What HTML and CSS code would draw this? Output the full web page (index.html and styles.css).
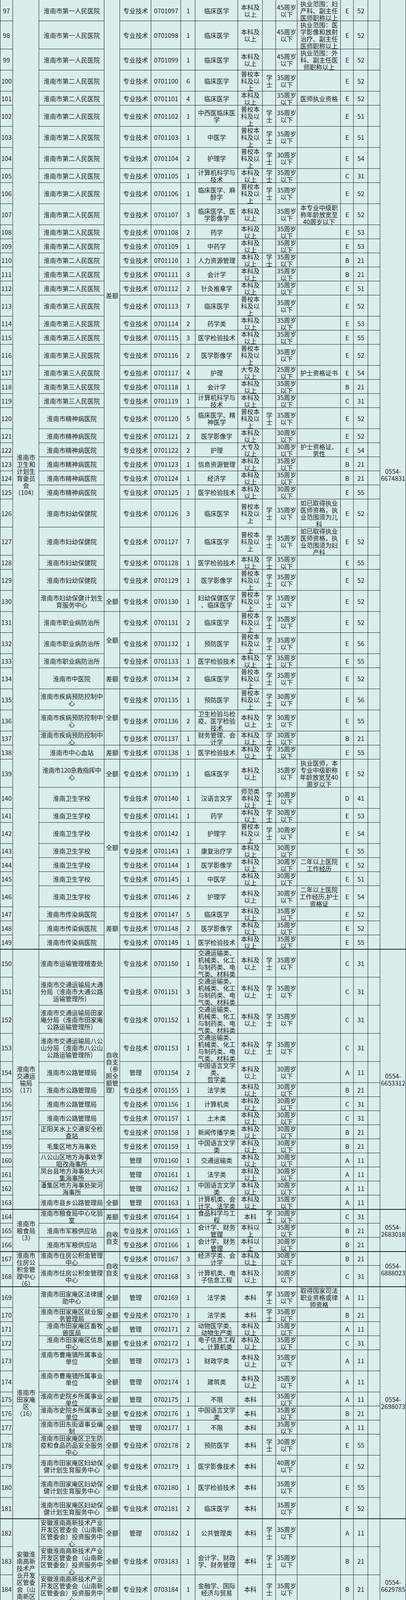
FILE: index.html
```html
<!DOCTYPE html>
<html lang="zh-CN">
<head>
<meta charset="utf-8">
<title>岗位表</title>
<link rel="stylesheet" href="styles.css">
</head>
<body>
<div class="sheet">
<div class="row h3"><div>97</div><div class="s135"><span>淮南市<br>卫生和<br>计划生<br>育委员<br>会<br>（104）</span></div><div>淮南市第一人民医院</div><div class="s84">差额</div><div>专业技术</div><div>0701097</div><div>1</div><div>临床医学</div><div><span>本科及<br>以上</span></div><div></div><div><span>45周岁<br>以下</span></div><div><span>执业范围：妇<br>产科、副主任<br>医师职称以上</span></div><div>E</div><div>52</div><div></div><div class="s135"><span>0554-<br>6674831</span></div></div>
<div class="row h4"><div>98</div><div>淮南市第一人民医院</div><div>专业技术</div><div>0701098</div><div>1</div><div>临床医学</div><div><span>本科及<br>以上</span></div><div></div><div><span>45周岁<br>以下</span></div><div><span>执业范围：医<br>学影像和放射<br>治疗、副主任<br>医师职称以上</span></div><div>E</div><div>52</div><div></div></div>
<div class="row h3"><div>99</div><div>淮南市第一人民医院</div><div>专业技术</div><div>0701099</div><div>1</div><div>临床医学</div><div><span>本科及<br>以上</span></div><div></div><div><span>45周岁<br>以下</span></div><div><span>执业范围：外<br>科、副主任医<br>师职称以上</span></div><div>E</div><div>52</div><div></div></div>
<div class="row h3"><div>100</div><div>淮南市第二人民医院</div><div>专业技术</div><div>0701100</div><div>6</div><div>临床医学</div><div><span>普校本<br>科及以<br>上</span></div><div><span>学<br>士</span></div><div><span>35周岁<br>以下</span></div><div></div><div>E</div><div>52</div><div></div></div>
<div class="row h2"><div>101</div><div>淮南市第二人民医院</div><div>专业技术</div><div>0701101</div><div>4</div><div>临床医学</div><div><span>本科及<br>以上</span></div><div></div><div><span>35周岁<br>以下</span></div><div>医师执业资格</div><div>E</div><div>52</div><div></div></div>
<div class="row h3"><div>102</div><div>淮南市第二人民医院</div><div>专业技术</div><div>0701102</div><div>1</div><div><span>中西医临床医<br>学</span></div><div><span>普校本<br>科及以<br>上</span></div><div><span>学<br>士</span></div><div><span>35周岁<br>以下</span></div><div></div><div>E</div><div>51</div><div></div></div>
<div class="row h3"><div>103</div><div>淮南市第二人民医院</div><div>专业技术</div><div>0701103</div><div>1</div><div>中医学</div><div><span>普校本<br>科及以<br>上</span></div><div><span>学<br>士</span></div><div><span>35周岁<br>以下</span></div><div></div><div>E</div><div>51</div><div></div></div>
<div class="row h3"><div>104</div><div>淮南市第二人民医院</div><div>专业技术</div><div>0701104</div><div>2</div><div>护理学</div><div><span>普校本<br>科及以<br>上</span></div><div><span>学<br>士</span></div><div><span>30周岁<br>以下</span></div><div></div><div>E</div><div>54</div><div></div></div>
<div class="row h2"><div>105</div><div>淮南市第二人民医院</div><div>专业技术</div><div>0701105</div><div>1</div><div><span>计算机科学与<br>技术</span></div><div><span>本科及<br>以上</span></div><div><span>学<br>士</span></div><div><span>35周岁<br>以下</span></div><div></div><div>C</div><div>31</div><div></div></div>
<div class="row h3"><div>106</div><div>淮南市第二人民医院</div><div>专业技术</div><div>0701106</div><div>1</div><div><span>临床医学、麻<br>醉学</span></div><div><span>普校本<br>科及以<br>上</span></div><div><span>学<br>士</span></div><div><span>35周岁<br>以下</span></div><div></div><div>E</div><div>52</div><div></div></div>
<div class="row h3"><div>107</div><div>淮南市第二人民医院</div><div>专业技术</div><div>0701107</div><div>3</div><div><span>临床医学、医<br>学影像学</span></div><div><span>本科及<br>以上</span></div><div></div><div><span>35周岁<br>以下</span></div><div><span>本专业中级职<br>称年龄放宽至<br>40周岁以下</span></div><div>E</div><div>52</div><div></div></div>
<div class="row h2"><div>108</div><div>淮南市第二人民医院</div><div>专业技术</div><div>0701108</div><div>2</div><div>药学</div><div><span>本科及<br>以上</span></div><div></div><div><span>35周岁<br>以下</span></div><div></div><div>E</div><div>53</div><div></div></div>
<div class="row h2"><div>109</div><div>淮南市第二人民医院</div><div>专业技术</div><div>0701109</div><div>1</div><div>中药学</div><div><span>本科及<br>以上</span></div><div></div><div><span>35周岁<br>以下</span></div><div></div><div>E</div><div>53</div><div></div></div>
<div class="row h2"><div>110</div><div>淮南市第二人民医院</div><div>专业技术</div><div>0701110</div><div>1</div><div>人力资源管理</div><div><span>本科及<br>以上</span></div><div><span>学<br>士</span></div><div><span>35周岁<br>以下</span></div><div></div><div>B</div><div>21</div><div></div></div>
<div class="row h2"><div>111</div><div>淮南市第二人民医院</div><div>专业技术</div><div>0701111</div><div>3</div><div>会计学</div><div><span>本科及<br>以上</span></div><div></div><div><span>35周岁<br>以下</span></div><div></div><div>B</div><div>21</div><div></div></div>
<div class="row h2"><div>112</div><div>淮南市第二人民医院</div><div>专业技术</div><div>0701112</div><div>2</div><div>针灸推拿学</div><div><span>本科及<br>以上</span></div><div></div><div><span>35周岁<br>以下</span></div><div></div><div>E</div><div>51</div><div></div></div>
<div class="row h3"><div>113</div><div>淮南市第三人民医院</div><div>专业技术</div><div>0701113</div><div>7</div><div>临床医学</div><div><span>普校本<br>科及以<br>上</span></div><div></div><div><span>35周岁<br>以下</span></div><div></div><div>E</div><div>52</div><div></div></div>
<div class="row h2"><div>114</div><div>淮南市第三人民医院</div><div>专业技术</div><div>0701114</div><div>2</div><div>药学类</div><div><span>本科及<br>以上</span></div><div></div><div><span>35周岁<br>以下</span></div><div></div><div>E</div><div>53</div><div></div></div>
<div class="row h2"><div>115</div><div>淮南市第三人民医院</div><div>专业技术</div><div>0701115</div><div>3</div><div>医学检验技术</div><div><span>本科及<br>以上</span></div><div></div><div><span>35周岁<br>以下</span></div><div></div><div>E</div><div>55</div><div></div></div>
<div class="row h3"><div>116</div><div>淮南市第三人民医院</div><div>专业技术</div><div>0701116</div><div>2</div><div>医学影像学</div><div><span>普校本<br>科及以<br>上</span></div><div></div><div><span>35周岁<br>以下</span></div><div></div><div>E</div><div>52</div><div></div></div>
<div class="row h2"><div>117</div><div>淮南市第三人民医院</div><div>专业技术</div><div>0701117</div><div>4</div><div>护理</div><div><span>大专及<br>以上</span></div><div></div><div><span>25周岁<br>以下</span></div><div>护士资格证书</div><div>E</div><div>54</div><div></div></div>
<div class="row h2"><div>118</div><div>淮南市第三人民医院</div><div>专业技术</div><div>0701118</div><div>1</div><div>会计学</div><div><span>本科及<br>以上</span></div><div></div><div><span>35周岁<br>以下</span></div><div></div><div>B</div><div>21</div><div></div></div>
<div class="row h2"><div>119</div><div>淮南市第三人民医院</div><div>专业技术</div><div>0701119</div><div>1</div><div><span>计算机科学与<br>技术</span></div><div><span>本科及<br>以上</span></div><div></div><div><span>35周岁<br>以下</span></div><div></div><div>C</div><div>31</div><div></div></div>
<div class="row h3"><div>120</div><div>淮南市精神病医院</div><div>专业技术</div><div>0701120</div><div>5</div><div><span>临床医学、精<br>神医学</span></div><div><span>普校本<br>科及以<br>上</span></div><div><span>学<br>士</span></div><div><span>35周岁<br>以下</span></div><div></div><div>E</div><div>52</div><div></div></div>
<div class="row h2"><div>121</div><div>淮南市精神病医院</div><div>专业技术</div><div>0701121</div><div>2</div><div>医学影像学</div><div><span>本科及<br>以上</span></div><div></div><div><span>30周岁<br>以下</span></div><div></div><div>E</div><div>52</div><div></div></div>
<div class="row h2"><div>122</div><div>淮南市精神病医院</div><div>专业技术</div><div>0701122</div><div>2</div><div>护理</div><div><span>大专及<br>以上</span></div><div></div><div><span>30周岁<br>以下</span></div><div><span>护士资格证、<br>男性</span></div><div>E</div><div>54</div><div></div></div>
<div class="row h2"><div>123</div><div>淮南市精神病医院</div><div>专业技术</div><div>0701123</div><div>1</div><div>信息资源管理</div><div><span>本科及<br>以上</span></div><div></div><div><span>35周岁<br>以下</span></div><div></div><div>B</div><div>21</div><div></div></div>
<div class="row h2"><div>124</div><div>淮南市精神病医院</div><div>专业技术</div><div>0701124</div><div>1</div><div>经济学</div><div><span>本科及<br>以上</span></div><div></div><div><span>35周岁<br>以下</span></div><div></div><div>B</div><div>21</div><div></div></div>
<div class="row h2"><div>125</div><div>淮南市精神病医院</div><div>专业技术</div><div>0701125</div><div>1</div><div>医学检验技术</div><div><span>本科及<br>以上</span></div><div></div><div><span>30周岁<br>以下</span></div><div></div><div>E</div><div>55</div><div></div></div>
<div class="row h4"><div>126</div><div>淮南市妇幼保健院</div><div>专业技术</div><div>0701126</div><div>3</div><div>临床医学</div><div><span>普校本<br>科及以<br>上</span></div><div><span>学<br>士</span></div><div><span>35周岁<br>以下</span></div><div><span>如已取得执业<br>医师资格，执<br>业范围须为儿<br>科</span></div><div>E</div><div>52</div><div></div></div>
<div class="row h4"><div>127</div><div>淮南市妇幼保健院</div><div>专业技术</div><div>0701127</div><div>7</div><div>临床医学</div><div><span>普校本<br>科及以<br>上</span></div><div><span>学<br>士</span></div><div><span>35周岁<br>以下</span></div><div><span>如已取得执业<br>医师资格，执<br>业范围须为妇<br>产科</span></div><div>E</div><div>52</div><div></div></div>
<div class="row h2"><div>128</div><div>淮南市妇幼保健院</div><div>专业技术</div><div>0701128</div><div>1</div><div>医学检验技术</div><div><span>本科及<br>以上</span></div><div><span>学<br>士</span></div><div><span>35周岁<br>以下</span></div><div></div><div>E</div><div>55</div><div></div></div>
<div class="row h3"><div>129</div><div>淮南市妇幼保健院</div><div>专业技术</div><div>0701129</div><div>1</div><div>医学影像学</div><div><span>普校本<br>科及以<br>上</span></div><div><span>学<br>士</span></div><div><span>35周岁<br>以下</span></div><div></div><div>E</div><div>52</div><div></div></div>
<div class="row h3"><div>130</div><div><span>淮南市妇幼保健计划生<br>育服务中心</span></div><div>全额</div><div>专业技术</div><div>0701130</div><div>1</div><div><span>妇幼保健医学<br>、临床医学</span></div><div><span>普校本<br>科及以<br>上</span></div><div><span>学<br>士</span></div><div><span>35周岁<br>以下</span></div><div></div><div>E</div><div>52</div><div></div></div>
<div class="row h3"><div>131</div><div>淮南市职业病防治所</div><div class="s8">全额</div><div>专业技术</div><div>0701131</div><div>2</div><div>临床医学</div><div><span>普校本<br>科及以<br>上</span></div><div><span>学<br>士</span></div><div><span>35周岁<br>以下</span></div><div></div><div>E</div><div>52</div><div></div></div>
<div class="row h3"><div>132</div><div>淮南市职业病防治所</div><div>专业技术</div><div>0701132</div><div>1</div><div>预防医学</div><div><span>普校本<br>科及以<br>上</span></div><div><span>学<br>士</span></div><div><span>35周岁<br>以下</span></div><div></div><div>E</div><div>56</div><div></div></div>
<div class="row h2"><div>133</div><div>淮南市职业病防治所</div><div>专业技术</div><div>0701133</div><div>1</div><div>医学检验技术</div><div><span>本科及<br>以上</span></div><div><span>学<br>士</span></div><div><span>35周岁<br>以下</span></div><div></div><div>E</div><div>55</div><div></div></div>
<div class="row h3"><div>134</div><div>淮南市中医院</div><div>差额</div><div>专业技术</div><div>0701134</div><div>2</div><div>临床医学</div><div><span>普校本<br>科及以<br>上</span></div><div><span>学<br>士</span></div><div><span>35周岁<br>以下</span></div><div></div><div>E</div><div>52</div><div></div></div>
<div class="row h3"><div>135</div><div><span>淮南市疾病预防控制中<br>心</span></div><div class="s8">全额</div><div>专业技术</div><div>0701135</div><div>1</div><div>预防医学</div><div><span>普校本<br>科及以<br>上</span></div><div><span>学<br>士</span></div><div><span>30周岁<br>以下</span></div><div></div><div>E</div><div>56</div><div></div></div>
<div class="row h3"><div>136</div><div><span>淮南市疾病预防控制中<br>心</span></div><div>专业技术</div><div>0701136</div><div>2</div><div><span>卫生检验与检<br>疫、医学检验<br>技术</span></div><div><span>本科及<br>以上</span></div><div><span>学<br>士</span></div><div><span>30周岁<br>以下</span></div><div></div><div>E</div><div>55</div><div></div></div>
<div class="row h2"><div>137</div><div><span>淮南市疾病预防控制中<br>心</span></div><div>专业技术</div><div>0701137</div><div>1</div><div><span>财务管理、会<br>计学</span></div><div><span>本科及<br>以上</span></div><div><span>学<br>士</span></div><div><span>30周岁<br>以下</span></div><div></div><div>B</div><div>21</div><div></div></div>
<div class="row h2"><div>138</div><div>淮南市中心血站</div><div>差额</div><div>专业技术</div><div>0701138</div><div>1</div><div>医学检验技术</div><div><span>本科及<br>以上</span></div><div><span>学<br>士</span></div><div><span>35周岁<br>以下</span></div><div></div><div>E</div><div>55</div><div></div></div>
<div class="row h4"><div>139</div><div class="tight"><span>淮南市120急救指挥中<br>心</span></div><div>全额</div><div>专业技术</div><div>0701139</div><div>1</div><div>临床医学</div><div><span>本科及<br>以上</span></div><div></div><div><span>35周岁<br>以下</span></div><div><span>执业医师，本<br>专业中级职称<br>年龄放宽至40<br>周岁以下</span></div><div>E</div><div>52</div><div></div></div>
<div class="row h3"><div>140</div><div>淮南卫生学校</div><div class="s17">全额</div><div>专业技术</div><div>0701140</div><div>1</div><div>汉语言文学</div><div><span>师范类<br>本科及<br>以上</span></div><div><span>学<br>士</span></div><div><span>30周岁<br>以下</span></div><div></div><div>D</div><div>41</div><div></div></div>
<div class="row h2"><div>141</div><div>淮南卫生学校</div><div>专业技术</div><div>0701141</div><div>1</div><div>药学</div><div><span>本科及<br>以上</span></div><div><span>学<br>士</span></div><div><span>30周岁<br>以下</span></div><div></div><div>E</div><div>53</div><div></div></div>
<div class="row h3"><div>142</div><div>淮南卫生学校</div><div>专业技术</div><div>0701142</div><div>1</div><div>护理学</div><div><span>普校本<br>科及以<br>上</span></div><div><span>学<br>士</span></div><div><span>30周岁<br>以下</span></div><div></div><div>E</div><div>54</div><div></div></div>
<div class="row h2"><div>143</div><div>淮南卫生学校</div><div>专业技术</div><div>0701143</div><div>1</div><div>康复治疗学</div><div><span>本科及<br>以上</span></div><div></div><div><span>30周岁<br>以下</span></div><div></div><div>E</div><div>55</div><div></div></div>
<div class="row h2"><div>144</div><div>淮南卫生学校</div><div>专业技术</div><div>0701144</div><div>1</div><div>医学影像学</div><div><span>本科及<br>以上</span></div><div></div><div><span>30周岁<br>以下</span></div><div><span>二年以上医院<br>工作经历</span></div><div>E</div><div>52</div><div></div></div>
<div class="row h2"><div>145</div><div>淮南卫生学校</div><div>专业技术</div><div>0701145</div><div>1</div><div>中医学</div><div><span>本科及<br>以上</span></div><div></div><div><span>30周岁<br>以下</span></div><div></div><div>E</div><div>51</div><div></div></div>
<div class="row h3"><div>146</div><div>淮南卫生学校</div><div>专业技术</div><div>0701146</div><div>2</div><div>护理学</div><div><span>本科及<br>以上</span></div><div></div><div><span>30周岁<br>以下</span></div><div><span>二年以上医院<br>工作经历,护士<br>资格证</span></div><div>E</div><div>54</div><div></div></div>
<div class="row h2"><div>147</div><div>淮南市传染病医院</div><div class="s6">差额</div><div>专业技术</div><div>0701147</div><div>5</div><div>临床医学</div><div><span>本科及<br>以上</span></div><div></div><div><span>35周岁<br>以下</span></div><div></div><div>E</div><div>52</div><div></div></div>
<div class="row h2"><div>148</div><div>淮南市传染病医院</div><div>专业技术</div><div>0701148</div><div>2</div><div>医学影像学</div><div><span>本科及<br>以上</span></div><div></div><div><span>35周岁<br>以下</span></div><div></div><div>E</div><div>52</div><div></div></div>
<div class="row h2"><div>149</div><div>淮南市传染病医院</div><div>专业技术</div><div>0701149</div><div>1</div><div>医学检验技术</div><div><span>本科及<br>以上</span></div><div></div><div><span>35周岁<br>以下</span></div><div></div><div>E</div><div>55</div><div></div></div>
<div class="row h4 gb"><div>150</div><div class="s37"><span>淮南市<br>交通运<br>输局<br>（17）</span></div><div>淮南市运输管理稽查处</div><div class="s35"><span>自收<br>自支<br>（参<br>照全<br>额管<br>理）</span></div><div>专业技术</div><div>0701150</div><div>1</div><div><span>交通运输类、<br>机械类、化工<br>与制药类、电<br>气类、材料类</span></div><div><span>本科及<br>以上</span></div><div><span>学<br>士</span></div><div><span>35周岁<br>以下</span></div><div></div><div>C</div><div>31</div><div></div><div class="s37"><span>0554-<br>6653312</span></div></div>
<div class="row h4"><div>151</div><div><span>淮南市交通运输局大通<br>分局（淮南市大通公路<br>运输管理所）</span></div><div>专业技术</div><div>0701151</div><div>3</div><div><span>交通运输类、<br>机械类、化工<br>与制药类、电<br>气类、材料类</span></div><div><span>本科及<br>以上</span></div><div><span>学<br>士</span></div><div><span>35周岁<br>以下</span></div><div></div><div>C</div><div>31</div><div></div></div>
<div class="row h4"><div>152</div><div><span>淮南市交通运输局田家<br>庵分局（淮南市田家庵<br>公路运输管理所）</span></div><div>专业技术</div><div>0701152</div><div>1</div><div><span>交通运输类、<br>机械类、化工<br>与制药类、电<br>气类、材料类</span></div><div><span>本科及<br>以上</span></div><div><span>学<br>士</span></div><div><span>35周岁<br>以下</span></div><div></div><div>C</div><div>31</div><div></div></div>
<div class="row h4"><div>153</div><div><span>淮南市交通运输局八公<br>山分局（淮南市八公山<br>公路运输管理所）</span></div><div>专业技术</div><div>0701153</div><div>1</div><div><span>交通运输类、<br>机械类、化工<br>与制药类、电<br>气类、材料类</span></div><div><span>本科及<br>以上</span></div><div><span>学<br>士</span></div><div><span>35周岁<br>以下</span></div><div></div><div>C</div><div>31</div><div></div></div>
<div class="row h3"><div>154</div><div>淮南市公路管理局</div><div>管理</div><div>0701154</div><div>2</div><div><span>中国语言文学<br>类、<br>哲学类</span></div><div><span>本科及<br>以上</span></div><div></div><div><span>30周岁<br>以下</span></div><div></div><div>A</div><div>11</div><div></div></div>
<div class="row h2"><div>155</div><div>淮南市公路管理局</div><div>专业技术</div><div>0701155</div><div>1</div><div>法学类</div><div><span>本科及<br>以上</span></div><div></div><div><span>30周岁<br>以下</span></div><div></div><div>B</div><div>21</div><div></div></div>
<div class="row h2"><div>156</div><div>淮南市公路管理局</div><div>专业技术</div><div>0701156</div><div>1</div><div>计算机类</div><div><span>本科及<br>以上</span></div><div></div><div><span>30周岁<br>以下</span></div><div></div><div>C</div><div>31</div><div></div></div>
<div class="row h2"><div>157</div><div>淮南市公路管理局</div><div>专业技术</div><div>0701157</div><div>1</div><div>土木类</div><div><span>本科及<br>以上</span></div><div></div><div><span>30周岁<br>以下</span></div><div></div><div>C</div><div>31</div><div></div></div>
<div class="row h2"><div>158</div><div><span>正阳关水上交通安全检<br>查站</span></div><div>专业技术</div><div>0701158</div><div>1</div><div>新闻传播学类</div><div><span>本科及<br>以上</span></div><div></div><div><span>30周岁<br>以下</span></div><div></div><div>B</div><div>21</div><div></div></div>
<div class="row h2"><div>159</div><div>毛集区地方海事处</div><div>专业技术</div><div>0701159</div><div>1</div><div><span>中国语言文学<br>类</span></div><div><span>本科及<br>以上</span></div><div></div><div><span>30周岁<br>以下</span></div><div></div><div>B</div><div>21</div><div></div></div>
<div class="row h2"><div>160</div><div><span>八公山区地方海事处李<br>咀孜海事所</span></div><div>管理</div><div>0701160</div><div>1</div><div>交通运输类</div><div><span>本科及<br>以上</span></div><div></div><div><span>30周岁<br>以下</span></div><div></div><div>A</div><div>11</div><div></div></div>
<div class="row h2"><div>161</div><div><span>凤台县地方海事处大兴<br>集海事所</span></div><div>管理</div><div>0701161</div><div>1</div><div>法学类</div><div><span>本科及<br>以上</span></div><div></div><div><span>30周岁<br>以下</span></div><div></div><div>A</div><div>11</div><div></div></div>
<div class="row h2"><div>162</div><div><span>潘集区地方海事处架河<br>海事所</span></div><div>管理</div><div>0701162</div><div>1</div><div><span>中国语言文学<br>类</span></div><div><span>本科及<br>以上</span></div><div></div><div><span>30周岁<br>以下</span></div><div></div><div>A</div><div>11</div><div></div></div>
<div class="row h2"><div>163</div><div>淮南市县乡公路管理局</div><div>全额</div><div>管理</div><div>0701163</div><div>1</div><div><span>计算机类、会<br>计学、法学类</span></div><div><span>本科及<br>以上</span></div><div></div><div><span>35周岁<br>以下</span></div><div></div><div>A</div><div>11</div><div></div></div>
<div class="row h2 gb"><div>164</div><div class="s6"><span>淮南市<br>粮食局<br>（3）</span></div><div><span>淮南市粮食局中心化验<br>室</span></div><div>差额</div><div>专业技术</div><div>0701164</div><div>1</div><div><span>食品科学与工<br>程</span></div><div>本科</div><div><span>学<br>士</span></div><div><span>30周岁<br>以下</span></div><div></div><div>C</div><div>31</div><div></div><div class="s6"><span>0554-<br>2683018</span></div></div>
<div class="row h2"><div>165</div><div>淮南市军粮供应站</div><div class="s4"><span>自收<br>自支</span></div><div>专业技术</div><div>0701165</div><div>1</div><div><span>会计学、财务<br>管理</span></div><div><span>本科以<br>上</span></div><div></div><div><span>35周岁<br>以下</span></div><div></div><div>B</div><div>21</div><div></div></div>
<div class="row h2"><div>166</div><div>淮南市军粮供应站</div><div>专业技术</div><div>0701166</div><div>1</div><div><span>会计学、财务<br>管理</span></div><div><span>本科以<br>上</span></div><div></div><div><span>30周岁<br>以下</span></div><div></div><div>B</div><div>21</div><div></div></div>
<div class="row h2 gb"><div>167</div><div class="s5"><span>淮南市<br>住房公<br>积金管<br>理中心<br>（6）</span></div><div><span>淮南市住房公积金管理<br>中心</span></div><div class="s5"><span>自收<br>自支</span></div><div>专业技术</div><div>0701167</div><div>3</div><div><span>经济学类、会<br>计学</span></div><div><span>本科及<br>以上</span></div><div></div><div><span>30周岁<br>以下</span></div><div></div><div>B</div><div>21</div><div></div><div class="s5"><span>0554-<br>6888023</span></div></div>
<div class="row h3"><div>168</div><div><span>淮南市住房公积金管理<br>中心</span></div><div>专业技术</div><div>0701168</div><div>3</div><div><span>计算机类、电<br>子信息工程</span></div><div><span>本科及<br>以上</span></div><div></div><div><span>30周岁<br>以下</span></div><div></div><div>C</div><div>31</div><div></div></div>
<div class="row h3 gb"><div>169</div><div class="s33"><span>淮南市<br>田家庵<br>区<br>（16）</span></div><div><span>淮南市田家庵区法律援<br>助中心</span></div><div>全额</div><div>管理</div><div>0702169</div><div>1</div><div>法学类</div><div>本科</div><div><span>学<br>士</span></div><div><span>35周岁<br>以下</span></div><div><span>取得国家司法<br>职业资格或律<br>师资格</span></div><div>A</div><div>11</div><div></div><div class="s33"><span>0554-<br>2698073</span></div></div>
<div class="row h2"><div>170</div><div><span>淮南市田家庵区就业服<br>务管理局</span></div><div>全额</div><div>专业技术</div><div>0702170</div><div>1</div><div>法学类</div><div>本科</div><div><span>学<br>士</span></div><div><span>35周岁<br>以下</span></div><div></div><div>B</div><div>21</div><div></div></div>
<div class="row h2"><div>171</div><div><span>　淮南市田家庵区畜牧<br>兽医局</span></div><div>全额</div><div>管理</div><div>0702171</div><div>2</div><div><span>动物医学类、<br>动物生产类</span></div><div><span>本科及<br>以上</span></div><div></div><div><span>35周岁<br>以下</span></div><div></div><div>A</div><div>11</div><div></div></div>
<div class="row h2"><div>172</div><div><span>　淮南市田家庵区信息<br>中心</span></div><div>差额</div><div>专业技术</div><div>0702172</div><div>1</div><div><span>电子信息工程<br>、计算机类</span></div><div><span>本科及<br>以上</span></div><div></div><div><span>35周岁<br>以下</span></div><div></div><div>C</div><div>31</div><div></div></div>
<div class="row h3"><div>173</div><div class="top"><span>淮南市曹庵镇所属事业<br>单位</span></div><div>全额</div><div>管理</div><div>0702173</div><div>1</div><div>财政学类</div><div><span>本科及<br>以上</span></div><div></div><div><span>35周岁<br>以下</span></div><div></div><div>A</div><div>11</div><div></div></div>
<div class="row h3"><div>174</div><div class="top"><span>淮南市曹庵镇所属事业<br>单位</span></div><div>全额</div><div>管理</div><div>0702174</div><div>1</div><div>建筑类</div><div><span>本科及<br>以上</span></div><div></div><div><span>35周岁<br>以下</span></div><div></div><div>A</div><div>11</div><div></div></div>
<div class="row h2"><div>175</div><div><span>淮南市史院乡所属事业<br>单位</span></div><div>全额</div><div>管理</div><div>0702175</div><div>1</div><div>不限</div><div>本科</div><div></div><div><span>35周岁<br>以下</span></div><div></div><div>A</div><div>11</div><div></div></div>
<div class="row h2"><div>176</div><div><span>淮南市史院乡所属事业<br>单位</span></div><div>全额</div><div>专业技术</div><div>0702176</div><div>1</div><div><span>中国语言文学<br>类</span></div><div>本科</div><div></div><div><span>35周岁<br>以下</span></div><div></div><div>B</div><div>21</div><div></div></div>
<div class="row h2"><div>177</div><div><span>淮南市田东街道事业编<br>制</span></div><div>全额</div><div>管理</div><div>0702177</div><div>1</div><div>不限</div><div>本科</div><div></div><div><span>35周岁<br>以下</span></div><div></div><div>A</div><div>11</div><div></div></div>
<div class="row h3"><div>178</div><div><span>淮南市田家庵区卫生防<br>疫和食品药品安全服务<br>中心</span></div><div>全额</div><div>专业技术</div><div>0702178</div><div>2</div><div>预防医学</div><div>本科</div><div><span>学<br>士</span></div><div><span>30周岁<br>以下</span></div><div></div><div>E</div><div>55</div><div></div></div>
<div class="row h3"><div>179</div><div><span>淮南市田家庵区妇幼保<br>健计划生育服务中心</span></div><div>全额</div><div>专业技术</div><div>0702179</div><div>1</div><div>医学影像技术</div><div>本科</div><div></div><div><span>40周岁<br>以下</span></div><div></div><div>E</div><div>52</div><div></div></div>
<div class="row h3"><div>180</div><div><span>淮南市田家庵区妇幼保<br>健计划生育服务中心</span></div><div>全额</div><div>专业技术</div><div>0702180</div><div>1</div><div>医学检验技术</div><div>本科</div><div></div><div><span>35周岁<br>以下</span></div><div></div><div>E</div><div>55</div><div></div></div>
<div class="row h3"><div>181</div><div><span>淮南市田家庵区妇幼保<br>健计划生育服务中心</span></div><div>全额</div><div>专业技术</div><div>0702181</div><div>2</div><div>临床医学</div><div>本科</div><div></div><div><span>35周岁<br>以下</span></div><div></div><div>E</div><div>52</div><div></div></div>
<div class="row h4 gb"><div>182</div><div class="s19"><span>安徽淮<br>南高新<br>技术产<br>业开发<br>区管委<br>会（山<br>南新区<br>管委<br>会）<br>（5）</span></div><div><span>安徽淮南高新技术产业<br>开发区管委会（山南新<br>区管委会）投资服务中<br>心</span></div><div>全额</div><div>管理</div><div>0703182</div><div>1</div><div>公共管理类</div><div>本科</div><div><span>学<br>士</span></div><div><span>35周岁<br>以下</span></div><div></div><div>A</div><div>11</div><div></div><div class="s19"><span>0554-<br>6629785</span></div></div>
<div class="row h4"><div>183</div><div><span>安徽淮南高新技术产业<br>开发区管委会（山南新<br>区管委会）投资服务中<br>心</span></div><div>全额</div><div>专业技术</div><div>0703183</div><div>1</div><div><span>会计学、财政<br>学、财务管理</span></div><div>本科</div><div><span>学<br>士</span></div><div><span>35周岁<br>以下</span></div><div></div><div>B</div><div>21</div><div></div></div>
<div class="row h4"><div>184</div><div><span>安徽淮南高新技术产业<br>开发区管委会（山南新<br>区管委会）投资服务中<br>心</span></div><div>全额</div><div>专业技术</div><div>0703184</div><div>1</div><div><span>金融学、国际<br>经济与贸易</span></div><div>本科</div><div><span>学<br>士</span></div><div><span>35周岁<br>以下</span></div><div></div><div>B</div><div>21</div><div></div></div>
<div class="row h4"><div>185</div><div><span>安徽淮南高新技术产业<br>开发区管委会（山南新<br>区管委会）投资服务中<br>心</span></div><div>全额</div><div>专业技术</div><div>0703185</div><div>1</div><div>农学类</div><div>本科</div><div><span>学<br>士</span></div><div><span>35周岁<br>以下</span></div><div></div><div>C</div><div>31</div><div></div></div>
<div class="row h3"><div>186</div><div><span>高新技术产业开发区管<br>委会（山南新区管委<br>会）会计核算中心</span></div><div>全额</div><div>管理</div><div>0703186</div><div>1</div><div>公共管理类</div><div>本科</div><div><span>学<br>士</span></div><div><span>35周岁<br>以下</span></div><div></div><div>A</div><div>11</div><div></div></div>
</div>
</body>
</html>
```

FILE: styles.css
```css
html, body {
  margin: 0;
  padding: 0;
  background: #ffffff;
}

.sheet {
  display: grid;
  width: 1039px;
  grid-template-columns: 33px 67px 167px 40px 80px 76px 37px 109px 63px 34px 55px 111px 33px 37px 31px 66px;
  grid-auto-rows: 18px;
  background: #daeded;
  font-family: "Noto Sans CJK SC", "Noto Sans", sans-serif;
  font-size: 16px;
  line-height: 18px;
  color: #222222;
  border-bottom: 1px solid #1c1c1c;
}

.row {
  display: contents;
}

.row > div {
  display: flex;
  align-items: center;
  justify-content: center;
  text-align: center;
  white-space: nowrap;
  min-width: 0;
  box-shadow: inset -1px -1px 0 #1c1c1c;
}

.row > div:first-child {
  box-shadow: inset 1px 0 0 #1c1c1c, inset -1px -1px 0 #1c1c1c;
}

.row.gb > div {
  box-shadow: inset 0 1px 0 #1c1c1c, inset -1px -1px 0 #1c1c1c;
}

.row.gb > div:first-child {
  box-shadow: inset 1px 1px 0 #1c1c1c, inset -1px -1px 0 #1c1c1c;
}

.row > div > span {
  display: block;
}

/* row heights, in 18px lines */
.h2 > div { grid-row-end: span 2; }
.h3 > div { grid-row-end: span 3; }
.h4 > div { grid-row-end: span 4; }

/* merged cells, in 18px lines */
.sheet .s4 { grid-row-end: span 4; }
.sheet .s5 { grid-row-end: span 5; }
.sheet .s6 { grid-row-end: span 6; }
.sheet .s8 { grid-row-end: span 8; }
.sheet .s17 { grid-row-end: span 17; }
.sheet .s19 { grid-row-end: span 19; }
.sheet .s33 { grid-row-end: span 33; }
.sheet .s35 { grid-row-end: span 35; }
.sheet .s37 { grid-row-end: span 37; }
.sheet .s84 { grid-row-end: span 84; }
.sheet .s135 { grid-row-end: span 135; }

.sheet .top {
  align-items: flex-start;
  padding-top: 2px;
}

.sheet .tight {
  letter-spacing: -0.4px;
}
```
